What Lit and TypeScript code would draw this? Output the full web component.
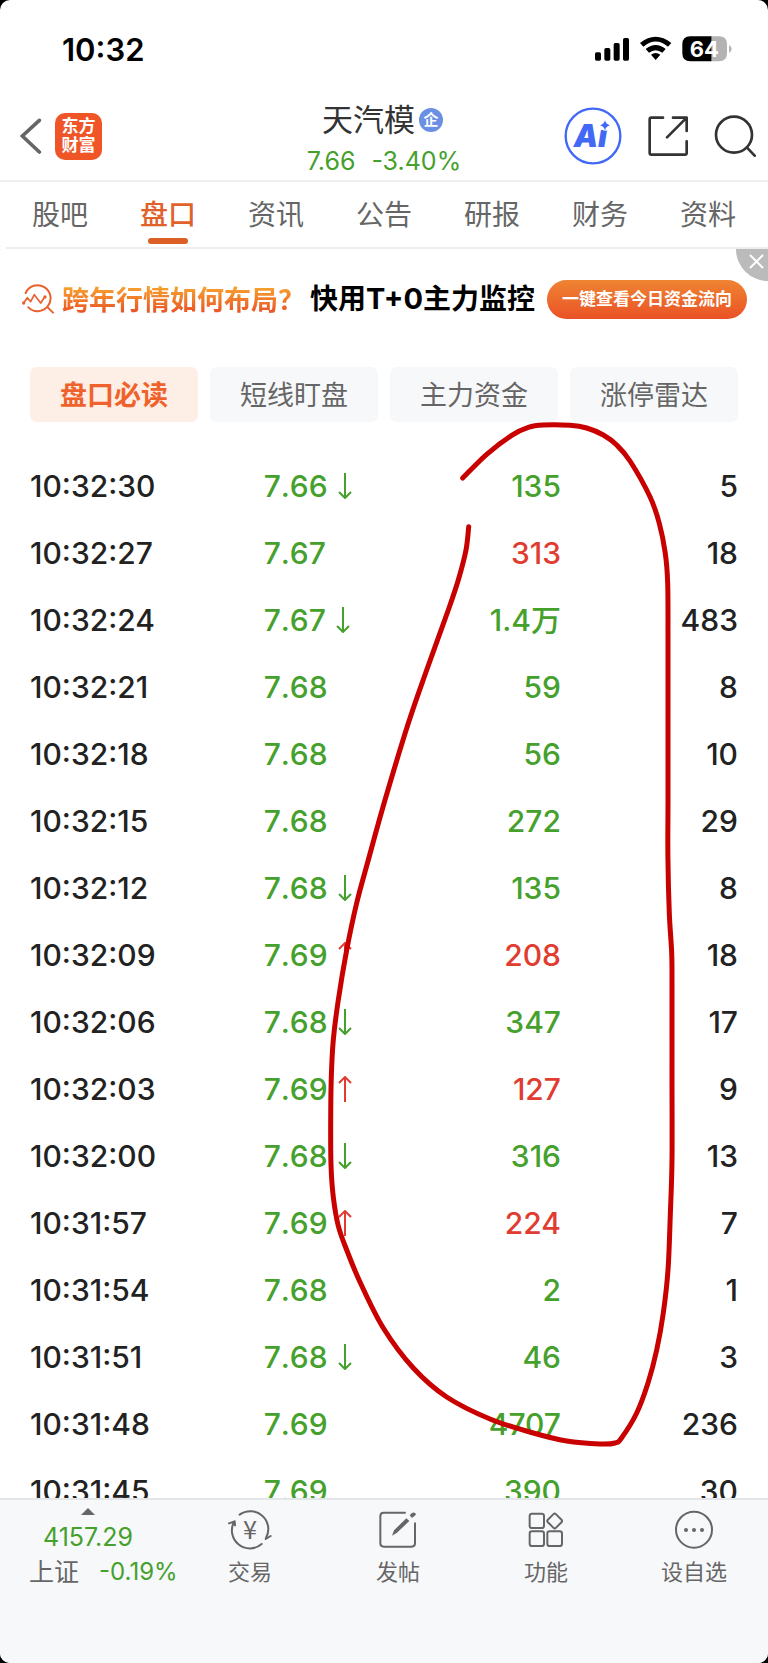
import { LitElement, html, css, svg, nothing } from "lit";
import { customElement, state } from "lit/decorators.js";
import { classMap } from "lit/directives/class-map.js";

type Tone = "up" | "down";
interface Trade {
  time: string;
  price: string;
  move?: Tone;
  volume: string;
  tone: Tone;
  count: string;
}

const t = (time: string, price: string, move: Tone | undefined, volume: string, tone: Tone, count: string): Trade =>
  ({ time, price, move, volume, tone, count });

const TRADES: Trade[] = [
  t("10:32:30", "7.66", "down", "135", "down", "5"),
  t("10:32:27", "7.67", undefined, "313", "up", "18"),
  t("10:32:24", "7.67", "down", "1.4万", "down", "483"),
  t("10:32:21", "7.68", undefined, "59", "down", "8"),
  t("10:32:18", "7.68", undefined, "56", "down", "10"),
  t("10:32:15", "7.68", undefined, "272", "down", "29"),
  t("10:32:12", "7.68", "down", "135", "down", "8"),
  t("10:32:09", "7.69", "up", "208", "up", "18"),
  t("10:32:06", "7.68", "down", "347", "down", "17"),
  t("10:32:03", "7.69", "up", "127", "up", "9"),
  t("10:32:00", "7.68", "down", "316", "down", "13"),
  t("10:31:57", "7.69", "up", "224", "up", "7"),
  t("10:31:54", "7.68", undefined, "2", "down", "1"),
  t("10:31:51", "7.68", "down", "46", "down", "3"),
  t("10:31:48", "7.69", undefined, "4707", "down", "236"),
  t("10:31:45", "7.69", undefined, "390", "down", "30"),
];

const TABS = ["股吧", "盘口", "资讯", "公告", "研报", "财务", "资料"];
const CHIPS = ["盘口必读", "短线盯盘", "主力资金", "涨停雷达"];

/* Points of the freehand marker loop around the volume column. */
const LOOP: [number, number][] = [
  [462.7, 478], [486.7, 454.3], [511.7, 435.3], [528.3, 427.3], [543.3, 425], [570, 425.3],
  [586.7, 428], [603.3, 435], [616.7, 445], [630, 461], [650, 496.7], [659.3, 523.3],
  [665.3, 553.3], [667.7, 583.3], [668, 640], [668, 720], [668, 800], [667.9, 856.7],
  [669.3, 913.3], [671.7, 953], [672, 987], [672, 1080], [672, 1160], [670.3, 1215],
  [668, 1270], [663.3, 1313], [656.7, 1350], [648, 1383], [636.7, 1413], [621.7, 1437.7],
  [615, 1443], [600, 1444], [566.7, 1441], [533.3, 1433], [490, 1419], [446.7, 1397],
  [413.3, 1368], [383.3, 1328], [360, 1282], [346.7, 1250], [338.3, 1226], [333.3, 1197],
  [331, 1165], [330.7, 1120], [331.3, 1077], [333.3, 1040], [338.3, 1000], [346.7, 950],
  [356.7, 903], [368.3, 860], [385, 800], [408.3, 723.3], [426.7, 670], [448.3, 610],
  [458.3, 580], [466, 550], [468.7, 526.7],
];

function smooth(points: [number, number][]): string {
  let d = `M${points[0][0]} ${points[0][1]}`;
  for (let i = 0; i < points.length - 1; i++) {
    const a = points[Math.max(i - 1, 0)];
    const b = points[i];
    const c = points[i + 1];
    const e = points[Math.min(i + 2, points.length - 1)];
    d += `C${b[0] + (c[0] - a[0]) / 6} ${b[1] + (c[1] - a[1]) / 6} ${c[0] - (e[0] - b[0]) / 6} ${c[1] - (e[1] - b[1]) / 6} ${c[0]} ${c[1]}`;
  }
  return d;
}

const tradeIcon = svg`<svg class="icon" viewBox="681 90 144 120" width="48" height="40" aria-hidden="true">
  <path d="M722 104A54 54 0 0 1 801 174M800 177L815 168M788 192A54 54 0 0 1 706 124M690 130L707 124L708 136" />
  <text class="yen" x="753" y="178" text-anchor="middle">¥</text></svg>`;
const postIcon = svg`<svg class="icon" viewBox="-27 90 144 120" width="48" height="40" aria-hidden="true">
  <path d="M66 98H2Q-8 98 -8 108V190Q-8 200 2 200H86Q96 200 96 190V130" />
  <path class="solid" d="M27 167L33 151L70 115L79 123L42 158ZM75 110L83 118M80 106L87 99Q93 95 97 100T94 108L87 114Z" /></svg>`;
const gridIcon = svg`<svg class="icon" viewBox="416 90 144 120" width="48" height="40" aria-hidden="true">
  <rect x="439" y="101" width="43" height="43" rx="7" /><rect x="439" y="154" width="43" height="44" rx="7" />
  <rect x="492" y="154" width="44" height="44" rx="7" />
  <rect x="497" y="106" width="34" height="34" rx="5" transform="rotate(45 514 123)" /></svg>`;
const moreIcon = svg`<svg class="icon" viewBox="858 90 144 120" width="48" height="40" aria-hidden="true">
  <circle cx="930" cy="149" r="54" />
  <g class="solid"><circle cx="906" cy="150" r="6" /><circle cx="930" cy="150" r="6" /><circle cx="954" cy="150" r="6" /></g></svg>`;

const ACTIONS = [
  { label: "交易", icon: tradeIcon },
  { label: "发帖", icon: postIcon },
  { label: "功能", icon: gridIcon },
  { label: "设自选", icon: moreIcon },
];

@customElement("app-root")
export class AppRoot extends LitElement {
  @state() private tab = 1;
  @state() private chip = 0;
  @state() private banner = true;

  static styles = css`
    :host {
      display: block;
      background: #000;
      font-family: Inter, "Noto Sans CJK SC", sans-serif;
      color: #222;
    }
    * { box-sizing: border-box; }
    button {
      font: inherit;
      color: inherit;
      background: none;
      border: 0;
      padding: 0;
      cursor: pointer;
    }
    a { color: inherit; text-decoration: none; }
    svg { display: block; }
    .screen {
      position: relative;
      display: flex;
      flex-direction: column;
      height: 100vh;
      background: #fff;
      border-radius: 10px;
      overflow: hidden;
    }
    .status {
      display: flex;
      justify-content: space-between;
      align-items: center;
      height: 98px;
      padding: 0 35px 0 62px;
      flex: none;
    }
    .clock { font-size: 31px; font-weight: 600; color: #000; }
    .pct { font: 700 66px Inter, sans-serif; fill: #fff; }

    .header {
      display: grid;
      grid-template-columns: 1fr auto 1fr;
      align-items: center;
      height: 84px;
      padding: 0 12px 8px;
      border-bottom: 2px solid #eee;
      flex: none;
    }
    .left, .right { display: flex; align-items: center; padding-bottom: 6px; }
    .left { gap: 13px; padding-left: 8px; }
    .right { justify-content: flex-end; gap: 25px; }
    .logo {
      display: grid;
      place-content: center;
      width: 47px;
      height: 47px;
      border-radius: 10px;
      background: #ef5527;
      color: #fff;
      font-size: 17px;
      line-height: 19px;
      font-weight: 700;
    }
    .title { text-align: center; }
    .name {
      display: flex;
      justify-content: center;
      align-items: center;
      gap: 4px;
      margin: 0;
      padding-right: 3px;
      font-size: 31px;
      line-height: 44px;
      font-weight: 400;
      color: #333;
    }
    .badge {
      width: 24px;
      height: 24px;
      border-radius: 50%;
      background: #6a8fe3;
      color: #fff;
      font-size: 15px;
      line-height: 24px;
      font-weight: 700;
    }
    .quote {
      display: flex;
      justify-content: center;
      gap: 16px;
      font-size: 25px;
      line-height: 38px;
    }
    .line { fill: none; stroke: #333; stroke-width: 8; stroke-linecap: round; stroke-linejoin: round; }
    .ai { fill: #4169f5; font: italic 900 92px Inter, sans-serif; }

    .tabs {
      display: flex;
      height: 67px;
      margin-left: 6px;
      padding-right: 6px;
      border-bottom: 2px solid #eee;
      flex: none;
    }
    .tab {
      display: flex;
      flex: 1;
      flex-direction: column;
      align-items: center;
      justify-content: flex-end;
      gap: 3px;
      padding-bottom: 3px;
      font-size: 28px;
      line-height: 40px;
      color: #666;
    }
    .tab::after { content: ""; width: 40px; height: 6px; border-radius: 3px; }
    .tab.on { color: #e0622a; font-weight: 500; }
    .tab.on::after { background: #dd5f28; }

    .banner {
      position: relative;
      display: flex;
      align-items: center;
      height: 101px;
      padding: 0 21px 0 22px;
      font-size: 28px;
      font-weight: 700;
      white-space: nowrap;
      flex: none;
    }
    .ask {
      margin-left: 7px;
      font-size: 27px;
      line-height: 40px;
      padding-bottom: 2px;
      background: linear-gradient(#f6a02f 20%, #ea5426 80%);
      background-clip: text;
      -webkit-background-clip: text;
      color: transparent;
      font-family: "Noto Sans CJK SC", sans-serif;
    }
    .pitch { flex: 1; margin-left: 5px; padding-bottom: 2px; line-height: 40px; color: #000; }
    .latin { font-size: 29px; }
    .go {
      width: 200px;
      height: 39px;
      border-radius: 20px;
      background: linear-gradient(#ef8432, #ea5226);
      color: #fff;
      font-size: 17px;
      font-weight: 700;
      text-align: center;
      line-height: 38px;
    }
    .close {
      position: absolute;
      top: 0;
      right: 0;
      width: 32px;
      height: 32px;
      border-bottom-left-radius: 32px;
      background: #bbb;
    }
    .chips {
      display: flex;
      gap: 12px;
      padding: 17px 30px 30px;
      flex: none;
    }
    .chip {
      flex: 1;
      height: 55px;
      padding-bottom: 2px;
      border-radius: 7px;
      background: #f7f8fa;
      color: #666;
      font-size: 27px;
    }
    .chip.on { background: #fdeee6; color: #f0622b; font-weight: 700; }

    .feed { flex: 1; min-height: 0; overflow: hidden; padding: 0 30px; }
    table { width: 100%; border-collapse: collapse; table-layout: fixed; }
    td { height: 67px; padding: 0; font-size: 30px; line-height: 40px; font-weight: 500; }
    .c-time { width: 33%; }
    .c-price { width: 17%; }
    .num { text-align: right; }
    .price { display: flex; align-items: center; gap: 10px; font-kerning: none; }
    .up { color: #e03c31; }
    .down { color: #45a02c; }
    .arrow { fill: none; stroke: currentColor; stroke-width: 2; }
    .arrow.up { transform: rotate(180deg); }
    .mark {
      position: absolute;
      top: 0;
      left: 0;
      width: 100%;
      pointer-events: none;
      fill: none;
      stroke: #c80000;
      stroke-width: 5;
      stroke-linecap: round;
    }

    .dock {
      display: flex;
      height: 165px;
      border-top: 2px solid #e4e5e8;
      background: #f7f8fa;
      color: #666;
      flex: none;
    }
    .index {
      display: flex;
      flex-direction: column;
      align-items: center;
      width: 176px;
      padding-top: 8px;
      white-space: nowrap;
    }
    .caret { fill: #666; }
    .points { padding-top: 4px; font-size: 25px; line-height: 36px; }
    .change { display: flex; align-items: center; gap: 20px; font-size: 24px; line-height: 34px; }
    .market { font-size: 25px; }
    .index .change { align-self: flex-start; padding-left: 29px; }
    .action {
      display: flex;
      flex: 1;
      flex-direction: column;
      align-items: center;
      gap: 5px;
      padding-top: 10px;
      font-size: 22px;
      line-height: 34px;
    }
    .icon { fill: none; stroke: #666; stroke-width: 6; stroke-linecap: round; stroke-linejoin: round; }
    .solid { fill: #666; stroke: none; }
    .yen { font: 400 76px "Noto Sans CJK SC", sans-serif; fill: #666; stroke: none; }
  `;

  private row(r: Trade) {
    return html`<tr>
      <td>${r.time}</td>
      <td><span class="price down">${r.price}${r.move
        ? html`<svg class=${classMap({ arrow: true, [r.move]: true })} width="14" height="26" viewBox="0 0 14 26" role="img" aria-label=${r.move}>
            <path d="M7 0V25M1 19L7 25L13 19" /></svg>`
        : nothing}</span></td>
      <td class="num ${r.tone}">${r.volume}</td>
      <td class="num">${r.count}</td>
    </tr>`;
  }

  render() {
    return html`<div class="screen">
      <div class="status">
        <span class="clock">10:32</span>
        <svg width="138" height="26" viewBox="633 107 414 78" role="img" aria-label="64%">
          <rect x="633" y="156" width="18" height="25" rx="5" /><rect x="661" y="143" width="18" height="38" rx="5" />
          <rect x="689" y="128" width="18" height="53" rx="5" /><rect x="717" y="113" width="18" height="68" rx="5" />
          <path d="M768 128Q815 90 862 128L852 139Q815 108 778 139ZM785 146Q815 122 845 146L835 157Q815 142 795 157ZM801 163Q815 153 829 163L815 179Z" />
          <path d="M919 108H983V183H919Q895 183 895 159V132Q895 108 919 108Z" />
          <path fill="#b3b3b3" d="M983 108H1005Q1029 108 1029 132V159Q1029 183 1005 183H983ZM1035 134Q1043 138 1043 146T1035 158Z" />
          <text class="pct" x="961" y="169" text-anchor="middle">64</text>
        </svg>
      </div>

      <header class="header">
        <div class="left">
          <button aria-label="返回"><svg width="22" height="36" viewBox="60 354 66 108">
            <path d="M118 361L67 408L118 456" fill="none" stroke="#666" stroke-width="11" stroke-linecap="round" /></svg></button>
          <a class="logo" href="#"><span>东方</span><span>财富</span></a>
        </div>
        <div class="title">
          <h1 class="name">天汽模<span class="badge">企</span></h1>
          <div class="quote down"><span>7.66</span><span>-3.40%</span></div>
        </div>
        <div class="right">
          <button aria-label="Ai"><svg width="58" height="58" viewBox="539 321 174 174">
            <circle cx="626" cy="408" r="82" fill="none" stroke="#4169f5" stroke-width="7" />
            <text class="ai" x="568" y="441">Ai</text>
            <circle cx="663" cy="374" r="18" fill="#fff" />
            <path fill="#4169f5" d="M662 361Q665 373 677 376Q665 379 662 391Q659 379 647 376Q659 373 662 361Z" /></svg></button>
          <button aria-label="分享"><svg class="line" width="42" height="42" viewBox="787 345 126 126">
            <path d="M835 353H800Q795 353 795 358V459Q795 464 800 464H901Q906 464 906 459V424M865 353H906V393M903 356L847 412" /></svg></button>
          <button aria-label="搜索"><svg class="line" width="42" height="42" viewBox="991 343 126 126">
            <circle cx="1051" cy="402" r="54" /><path d="M1090 441L1113 465" /></svg></button>
        </div>
      </header>

      <nav class="tabs">
        ${TABS.map((label, i) => html`<button class=${classMap({ tab: true, on: i === this.tab })} @click=${() => (this.tab = i)}>${label}</button>`)}
      </nav>

      ${this.banner ? html`<section class="banner">
        <svg width="33" height="33" viewBox="64 128 99 99" fill="none" stroke="#e8602c" stroke-width="6" stroke-linecap="round" stroke-linejoin="round" aria-hidden="true">
          <path d="M75 158A39 39 0 1 1 83 201M141 201L157 217" />
          <path stroke-width="5" d="M69 188L80 172L90 184L101 163L120 188L132 170" />
          <g fill="#e8602c" stroke="none"><circle cx="69" cy="188" r="5" /><circle cx="133" cy="170" r="5" /></g></svg>
        <span class="ask">跨年行情如何布局？</span>
        <span class="pitch">快用<span class="latin">T+0</span>主力监控</span>
        <a class="go" href="#">一键查看今日资金流向</a>
        <button class="close" aria-label="关闭" @click=${() => (this.banner = false)}>
          <svg width="32" height="32" viewBox="0 0 32 32" stroke="#fff" stroke-width="2"><path d="M14 6L27 19M27 6L14 19" /></svg>
        </button>
      </section>` : nothing}

      <div class="chips">
        ${CHIPS.map((label, i) => html`<button class=${classMap({ chip: true, on: i === this.chip })} @click=${() => (this.chip = i)}>${label}</button>`)}
      </div>

      <main class="feed">
        <table>
          <colgroup><col class="c-time" /><col class="c-price" /><col /><col /></colgroup>
          <tbody>${TRADES.map((r) => this.row(r))}</tbody>
        </table>
      </main>

      <svg class="mark" viewBox="0 0 768 1663" aria-hidden="true"><path d=${smooth(LOOP)} /></svg>

      <footer class="dock">
        <a class="index" href="#">
          <svg class="caret" width="14" height="7" viewBox="0 0 14 7" aria-hidden="true"><path d="M7 0L14 7H0Z" /></svg>
          <span class="points down">4157.29</span>
          <span class="change"><span class="market">上证</span><span class="down">-0.19%</span></span>
        </a>
        ${ACTIONS.map((a) => html`<button class="action">${a.icon}<span>${a.label}</span></button>`)}
      </footer>
    </div>`;
  }
}
